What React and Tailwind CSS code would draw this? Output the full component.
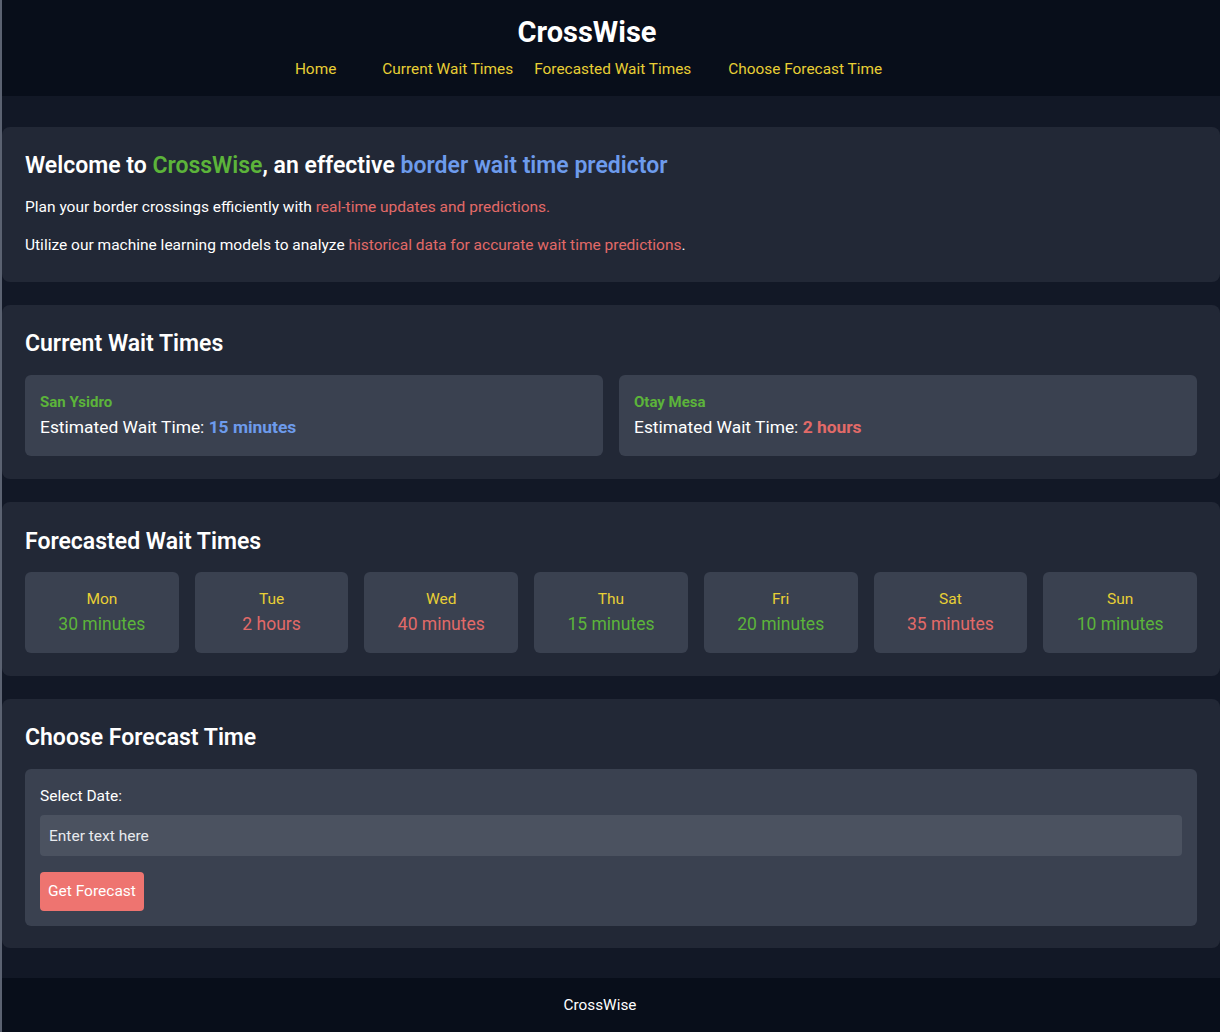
const forecast = [
  { day: 'Mon', value: '30 minutes', tone: 'good' },
  { day: 'Tue', value: '2 hours', tone: 'bad' },
  { day: 'Wed', value: '40 minutes', tone: 'bad' },
  { day: 'Thu', value: '15 minutes', tone: 'good' },
  { day: 'Fri', value: '20 minutes', tone: 'good' },
  { day: 'Sat', value: '35 minutes', tone: 'bad' },
  { day: 'Sun', value: '10 minutes', tone: 'good' },
];

export default function App() {
  return (
    <div
      className="min-h-screen flex flex-col bg-[#121826] text-white border-l-2 border-[#5b6271]"
      style={{ fontFamily: 'Roboto, "Noto Sans", sans-serif' }}
    >
      {/* Header */}
      <header className="bg-[#080e1a] h-[96px] flex flex-col items-center pt-[15px] pr-[48px]">
        <h1 className="text-[29px] leading-[34px] font-bold">CrossWise</h1>
        <nav className="flex text-[15.4px] text-[#e8cf35] mt-[9px] ml-[3px]">
          <a className="mr-[46px]">Home</a>
          <a className="mr-[21px]">Current Wait Times</a>
          <a className="mr-[37px]">Forecasted Wait Times</a>
          <a>Choose Forecast Time</a>
        </nav>
      </header>

      <main className="flex-1 flex flex-col gap-[23px] pt-[31px] pb-[30px]">
        {/* Welcome */}
        <section className="bg-[#222836] rounded-lg px-[23px] pt-[23px] pb-[27px]">
          <h2 className="text-[23px] leading-[32px] font-semibold">
            Welcome to <span className="text-[#5cb43a]">CrossWise</span>, an effective{' '}
            <span className="text-[#6d9bec]">border wait time predictor</span>
          </h2>
          <p className="text-[15.5px] leading-[20px] mt-[15px]">
            Plan your border crossings efficiently with{' '}
            <span className="text-[#e26a68]">real-time updates and predictions.</span>
          </p>
          <p className="text-[15.5px] leading-[20px] mt-[18px]">
            Utilize our machine learning models to analyze{' '}
            <span className="text-[#e26a68]">historical data for accurate wait time predictions</span>.
          </p>
        </section>

        {/* Current */}
        <section className="bg-[#222836] rounded-lg px-[23px] pt-[23px] pb-[23px]">
          <h2 className="text-[23px] leading-[32px] font-semibold">Current Wait Times</h2>
          <div className="grid grid-cols-2 gap-4 mt-[15px]">
            <div className="bg-[#3a4150] rounded-md px-[15px] pt-[17px] h-[81px]">
              <div className="text-[15px] leading-[20px] font-bold text-[#5cb43a]">San Ysidro</div>
              <div className="text-[17.4px] leading-[24px] mt-[3px]">
                Estimated Wait Time: <span className="font-bold text-[#6d9bec]">15 minutes</span>
              </div>
            </div>
            <div className="bg-[#3a4150] rounded-md px-[15px] pt-[17px] h-[81px]">
              <div className="text-[15px] leading-[20px] font-bold text-[#5cb43a]">Otay Mesa</div>
              <div className="text-[17.4px] leading-[24px] mt-[3px]">
                Estimated Wait Time: <span className="font-bold text-[#e26a68]">2 hours</span>
              </div>
            </div>
          </div>
        </section>

        {/* Forecast */}
        <section className="bg-[#222836] rounded-lg px-[23px] pt-[24px] pb-[23px]">
          <h2 className="text-[23px] leading-[32px] font-semibold">Forecasted Wait Times</h2>
          <div className="grid grid-cols-7 gap-4 mt-[14px]">
            {forecast.map(f => (
              <div
                key={f.day}
                className="bg-[#3a4150] rounded-md h-[81px] flex flex-col items-center pt-[17px]"
              >
                <div className="text-[15.5px] leading-[20px] text-[#e8cf35]">{f.day}</div>
                <div
                  className={
                    'text-[17.5px] leading-[24px] mt-[3px] ' +
                    (f.tone === 'good' ? 'text-[#5cb43a]' : 'text-[#e26a68]')
                  }
                >
                  {f.value}
                </div>
              </div>
            ))}
          </div>
        </section>

        {/* Choose */}
        <section className="bg-[#222836] rounded-lg px-[23px] pt-[23px] pb-[22px]">
          <h2 className="text-[23px] leading-[32px] font-semibold">Choose Forecast Time</h2>
          <div className="bg-[#3a4150] rounded-md mt-[15px] px-[15px] pt-[17px] pb-[15px]">
            <label className="block text-[15.5px] leading-[20px]">Select Date:</label>
            <input
              type="text"
              placeholder="Enter text here"
              className="block w-full mt-[9px] h-[41px] bg-[#4b5260] rounded px-[9px] text-[15.5px] text-white placeholder:text-[#e8eaee] outline-none"
            />
            <button className="mt-[16px] h-[39px] px-[8px] bg-[#ee7470] rounded text-[15.5px] text-white">
              Get Forecast
            </button>
          </div>
        </section>
      </main>

      <footer className="bg-[#080e1a] h-[54px] flex items-center justify-center text-[15.3px] pr-[22px]">
        CrossWise
      </footer>
    </div>
  );
}
